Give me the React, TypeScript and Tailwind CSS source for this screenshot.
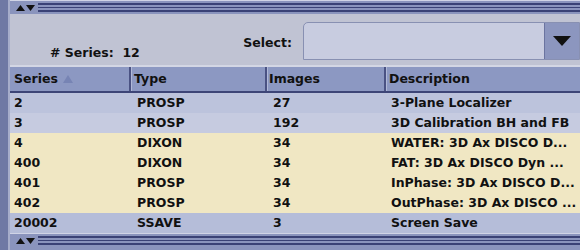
import React from 'react';

const rows = [
  { series: '2', type: 'PROSP', images: '27', desc: '3-Plane Localizer', bg: 'bg-[#bcc3dc]' },
  { series: '3', type: 'PROSP', images: '192', desc: '3D Calibration BH and FB', bg: 'bg-[#c6cbe0]' },
  { series: '4', type: 'DIXON', images: '34', desc: 'WATER: 3D Ax DISCO D...', bg: 'bg-[#f0e7c3]' },
  { series: '400', type: 'DIXON', images: '34', desc: 'FAT: 3D Ax DISCO Dyn ...', bg: 'bg-[#f0e7c3]' },
  { series: '401', type: 'PROSP', images: '34', desc: 'InPhase: 3D Ax DISCO D...', bg: 'bg-[#f0e7c3]' },
  { series: '402', type: 'PROSP', images: '34', desc: 'OutPhase: 3D Ax DISCO ...', bg: 'bg-[#f0e7c3]' },
  { series: '20002', type: 'SSAVE', images: '3', desc: 'Screen Save', bg: 'bg-[#b5bdd9]' },
];

const Splitter = () => (
  <div className="h-[14px] flex items-stretch bg-[#8a94bd] border-t border-[#d0d4e6]">
    {/* up/down arrows */}
    <div className="w-[28px] flex items-center justify-center gap-[1px] pl-[2px]">
      <svg width="9" height="6" viewBox="0 0 9 6"><polygon points="0,6 4.5,0 9,6" fill="#111" /></svg>
      <svg width="9" height="6" viewBox="0 0 9 6"><polygon points="0,0 9,0 4.5,6" fill="#111" /></svg>
    </div>
    <div className="flex-1 flex flex-col justify-center gap-[2px] py-[2px]">
      <div className="h-[2px] bg-[#3a4276]" />
      <div className="h-[2px] bg-[#3a4276]" />
      <div className="h-[2px] bg-[#3a4276]" />
    </div>
  </div>
);

export default function App() {
  return (
    <div
      className="w-[580px] h-[250px] flex bg-[#c0c3d3] text-[#111] overflow-hidden"
      style={{ fontFamily: '"DejaVu Sans", "Liberation Sans", sans-serif' }}
    >
      {/* left rail */}
      <div className="w-[10px] bg-[#6f79a4] border-r-2 border-[#a6adca]" />

      <div className="flex-1 flex flex-col min-w-0">
        <Splitter />

        {/* info panel */}
        <div className="h-[53px] flex items-start pt-[8px] border-b-2 border-[#d3d6e4] text-[12.5px] font-bold">
          <div className="w-[230px] pt-[22px] pl-[40px] leading-[18px]">
            # Series:&nbsp;&nbsp;12
          </div>
          <div className="pt-[12px] w-[52px] text-right leading-[18px]">Select:</div>
          <div className="ml-[11px] flex-1 h-[38px] flex rounded-tl-[5px] border border-[#8890b2] bg-[#c8cce0] overflow-hidden">
            <div className="flex-1" />
            <div className="w-[35px] bg-[#8c96bf] border-l border-[#6b74a0] flex items-center justify-center">
              <svg width="18" height="10" viewBox="0 0 18 10"><polygon points="0,0 18,0 9,10" fill="#111" /></svg>
            </div>
          </div>
        </div>

        {/* header */}
        <div className="h-[26px] flex bg-[#8c98c2] border-b-2 border-[#3d4577] text-[12.5px] font-bold">
          <div className="w-[121px] pl-[4px] flex items-center border-r-2 border-[#4a5283]">
            Series
            <svg className="ml-[5px]" width="10" height="8" viewBox="0 0 10 8"><polygon points="0,8 5,0 10,8" fill="#7784b4" /></svg>
          </div>
          <div className="w-[136px] pl-[2px] flex items-center border-r-2 border-[#4a5283] border-l border-l-[#b0b8d8]">Type</div>
          <div className="w-[119px] pl-[1px] flex items-center border-r-2 border-[#4a5283] border-l border-l-[#b0b8d8]">Images</div>
          <div className="flex-1 pl-[2px] flex items-center border-l border-l-[#b0b8d8]">Description</div>
        </div>

        {/* rows */}
        <div className="flex flex-col">
          {rows.map((r) => (
            <div key={r.series} className={`h-[20px] flex items-center text-[12.5px] font-bold ${r.bg}`}>
              <div className="w-[121px] pl-[4px]">{r.series}</div>
              <div className="w-[136px] pl-[6px]">{r.type}</div>
              <div className="w-[119px] pl-[6px]">{r.images}</div>
              <div className="flex-1 pl-[5px] whitespace-nowrap">{r.desc}</div>
            </div>
          ))}
        </div>

        <Splitter />
        <div className="flex-1 bg-[#8a94bd]" />
      </div>
    </div>
  );
}
